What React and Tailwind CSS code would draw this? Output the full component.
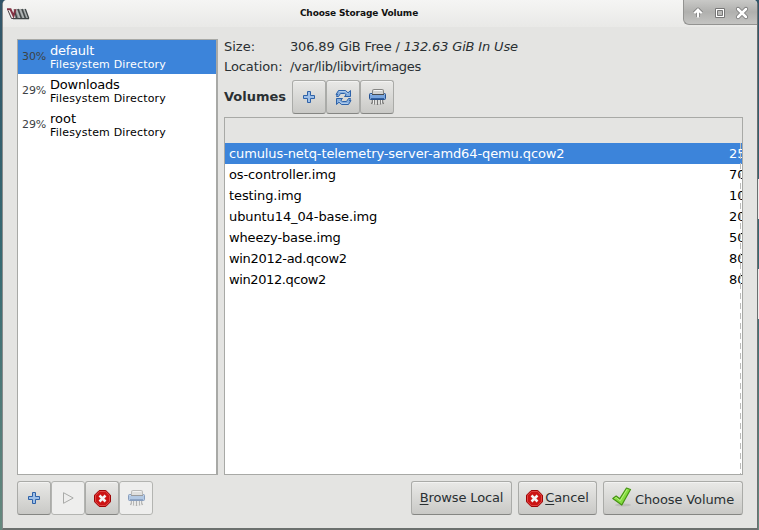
import React from 'react';

const pools = [
  { name: 'default', pct: '30%', track: 'tracking-[-0.25px]', selected: true },
  { name: 'Downloads', pct: '29%', track: 'tracking-[-0.2px]' },
  { name: 'root', pct: '29%', track: 'tracking-normal' },
];

const volumes = [
  { name: 'cumulus-netq-telemetry-server-amd64-qemu.qcow2', size: '25', track: 'tracking-[-0.11px]', selected: true },
  { name: 'os-controller.img', size: '70', track: 'tracking-[-0.12px]' },
  { name: 'testing.img', size: '10', track: 'tracking-[-0.1px]' },
  { name: 'ubuntu14_04-base.img', size: '20', track: 'tracking-[-0.1px]' },
  { name: 'wheezy-base.img', size: '50', track: 'tracking-[-0.13px]' },
  { name: 'win2012-ad.qcow2', size: '80', track: 'tracking-[-0.32px]' },
  { name: 'win2012.qcow2', size: '80', track: 'tracking-[-0.39px]' },
];

function PlusIcon() {
  return (
    <svg width="16" height="16" viewBox="0 0 16 16">
      <path d="M6.500 2.500h3v4h4v3h-4v4h-3v-4h-4v-3h4z" fill="#9dbfe8" stroke="#2f62a8" strokeLinejoin="round" />
    </svg>
  );
}

function RefreshIcon() {
  return (
    <svg width="17" height="17" viewBox="0 0 17 17" strokeLinejoin="miter">
      <g fill="#86aede" stroke="#2d62a9" strokeWidth="1">
        <path d="M1 5.500L3.500 1.500H10.500L13 3.800L15.500 1.500V7.500H9.500L11.200 5.700L9.500 4.500H5.500L3.500 7.500H1.500C1.200 6.800 2 6 3 5.300z" />
        <path d="M16 11.500L13.500 15.500H6.500L4 13.200L1.500 15.500V9.500H7.500L5.800 11.300L7.500 12.500H11.500L13.500 9.500H15.500C15.800 10.200 15 11 14 11.700z" />
      </g>
      <path d="M4 2.500h6l3 2.500M13 14.500H7L4 12" fill="none" stroke="#bad2ef" strokeWidth=".8" />
    </svg>
  );
}

function ShredderIcon({ faded = false }) {
  return (
    <svg width="17" height="17" viewBox="0 0 17 17" className={faded ? 'opacity-50' : ''}>
      <path d="M3.500 10v3L2.500 15M5.500 10v5.500M8.500 10v6M11.500 10v5.500M13.500 10v3l1 2" fill="none" stroke="#757575" strokeWidth="1.400" />
      <path d="M4.500 10v5M7 10v5M10 10v5M12.500 10v4.500" stroke="#eeeeec" strokeWidth="1.200" />
      <rect x=".5" y="4.500" width="16" height="6" rx="1" fill="#79a5dd" stroke="#24508f" />
      <path d="M1.500 5.500h14" stroke="#a6c6ec" />
      <path d="M2 9.500h13" stroke="#315f9f" />
      <rect x="3.500" y=".5" width="11" height="5" rx="1" fill="#d3d3d1" stroke="#858583" />
      <path d="M5 1.500h8" stroke="#f5f5f5" />
      <path d="M3 5.500h12" stroke="#4a4d50" />
    </svg>
  );
}

function StopIcon() {
  return (
    <svg width="17" height="17" viewBox="0 0 17 17">
      <path d="M5.200.5h6.600l4.700 4.700v6.600l-4.700 4.700H5.200L.5 11.800V5.200z" fill="#cc1414" stroke="#9c0505" />
      <path d="M5.600 1.500h5.800l4.100 4.100v5.800l-4.100 4.100H5.600l-4.100-4.100V5.600z" fill="none" stroke="#e35151" strokeWidth=".8" />
      <path d="m5.500 5.500 6 6M11.500 5.500l-6 6" stroke="#f4f4f4" strokeWidth="2.500" />
    </svg>
  );
}

function PlayIcon() {
  return (
    <svg width="16" height="16" viewBox="0 0 16 16">
      <path d="M3.500 2.700v10.600L13.200 8z" fill="#ededec" stroke="#a9aaa8" />
    </svg>
  );
}

function CheckIcon() {
  return (
    <svg width="20" height="20" viewBox="0 0 20 20">
      <ellipse cx="11" cy="18" rx="8" ry="1.500" fill="#a9a9a6" opacity=".5" />
      <path d="M.8 11.500l3.400-2.500 3.500 2.800L14.500 1l4 1.500L9.800 18z" fill="#84dc3f" stroke="#459313" strokeWidth="1.200" strokeLinejoin="round" />
      <path d="M2.600 11.500l1.600-1 4 3.300L15.100 2.300" fill="none" stroke="#b9f382" />
    </svg>
  );
}

function Logo() {
  return (
    <svg width="23" height="12" viewBox="0 0 23 12">
      <path d="M6.500 1H18l4 9.500H8z" fill="#8d9292" />
      <path d="M9 1l3.500 9M13 1l3.500 9M17 1l3.500 9" stroke="#b4b8b8" strokeWidth="1.300" />
      <path d="M11 1l3.500 9.500M15 1l3.500 9.500M18.300 1l3.500 9.500M7.500 3l2.500 7.500M6 10.700h16" stroke="#3f4545" strokeWidth="1.300" />
      <path d="M0 1.300h3.500L6.500 8l2-6.700" fill="none" stroke="#823243" strokeWidth="2" />
      <path d="M1 2.500l3.500 8h3" fill="none" stroke="#4b4247" />
    </svg>
  );
}

function WindowControls() {
  return (
    <div className="flex h-[25px] w-[74px] shrink-0 items-start gap-[6px] rounded-bl-[6px] rounded-tr-[4px] border-b border-l border-[#939391] bg-linear-to-b from-[#c9c9c7] via-[#b0b0ae] to-[#c4c4c2] pl-[6px] pt-[5px]">
      <svg width="16" height="16" viewBox="0 0 16 16">
        <path d="M8 12V6M4.500 8.200L8 4.700l3.500 3.500" fill="none" stroke="#777" strokeWidth="4" strokeLinejoin="round" />
        <path d="M8 12.500V6M4.300 8.300L8 4.600l3.700 3.700" fill="none" stroke="#fff" strokeWidth="2.300" />
      </svg>
      <svg width="16" height="16" viewBox="0 0 16 16">
        <path d="M3.500 3.500h9v9h-9z" fill="#fff" stroke="#777" />
        <path d="M5.500 5.500h5v5h-5z" fill="#b9b9b7" stroke="#777" />
      </svg>
      <svg width="16" height="16" viewBox="0 0 16 16">
        <path d="M4 4l8 8M12 4l-8 8" stroke="#777" strokeWidth="4.200" strokeLinecap="round" />
        <path d="M4 4l8 8M12 4l-8 8" stroke="#fff" strokeWidth="2.500" strokeLinecap="round" />
      </svg>
    </div>
  );
}

function Button({ children, disabled = false, className = 'w-[34px]' }) {
  return (
    <button
      className={`flex h-[34px] items-center justify-center rounded-[3px] border ${
        disabled
          ? 'border-[#b3b4b1] bg-[#eeeeed]'
          : 'border-[#aaaba8] border-b-[#858683] bg-linear-to-b from-[#e9e9e7] to-[#c9c9c6] shadow-[inset_0_1px_0_#f3f3f2]'
      } ${className}`}
    >
      {children}
    </button>
  );
}

function PoolRow({ pool }) {
  return (
    <div className={`flex h-[34px] items-center pl-1 ${pool.selected ? 'bg-[#3c84da] text-white' : 'text-black'}`}>
      <span className="w-7 text-[11px] tracking-[-0.1px] text-[#3d4245]">{pool.pct}</span>
      <div className="flex flex-col pb-px">
        <span className={`h-[15px] text-[13px] leading-[15px] ${pool.track}`}>{pool.name}</span>
        <span className="h-[13px] text-[11px] leading-[13px] tracking-[0.18px]">Filesystem Directory</span>
      </div>
    </div>
  );
}

export default function App() {
  return (
    <div className="flex h-[530px] w-[759px] overflow-hidden whitespace-nowrap bg-linear-to-b from-[#315569] via-[#376b73] to-[#66897e] font-['DejaVu_Sans',sans-serif] text-[13px] text-[#2a3033]">
      <div className="ml-[2px] flex h-[530px] w-[756px] shrink-0 flex-col rounded-t-[5px] border-x border-b-2 border-l-[#85898a] border-r-[#6b6f70] border-b-[#6b706e] bg-[#e4e4e2]">
        <header className="flex h-[27px] shrink-0 items-start rounded-t-[4px] bg-linear-to-b from-[#f5f5f4] to-[#e9e9e7]">
          <div className="w-[80px] pl-1 pt-[8px]"><Logo /></div>
          <div className="flex-1 pt-[6px] text-center text-[9px] leading-[14px] font-bold text-[#111]">
            <span className="mr-[48px] tracking-[-0.12px]">Choose Storage Volume</span>
          </div>
          <WindowControls />
        </header>
        <main className="flex h-[448px] gap-[6px] pl-[14px] pt-3">
          <section className="h-[436px] w-[201px] shrink-0 border border-r-2 border-[#a8a9a6] bg-white">
            {pools.map((pool) => <PoolRow key={pool.name} pool={pool} />)}
          </section>
          <section className="flex w-[519px] shrink-0 flex-col">
            <div className="flex h-[20px] items-start leading-[15px]">
              <span className="w-[66px]">Size:</span>
              <span className="tracking-[-0.16px]">306.89 GiB Free / <i>132.63 GiB In Use</i></span>
            </div>
            <div className="flex h-[21px] items-start leading-[15px]">
              <span className="w-[66px] tracking-[-0.1px]">Location:</span>
              <span className="tracking-[-0.33px]">/var/lib/libvirt/images</span>
            </div>
            <div className="flex h-[37px] items-start">
              <b className="w-[68px] leading-[33px]">Volumes</b>
              <Button><PlusIcon /></Button>
              <Button><RefreshIcon /></Button>
              <Button><ShredderIcon /></Button>
            </div>
            <div className="relative h-[358px] overflow-hidden border border-[#a8a9a6] bg-white text-black">
              <div className="h-[25px] bg-[#e4e4e2]" />
              {volumes.map((v) => (
                <div key={v.name} className={`flex h-[21px] pl-1 leading-[21px] ${v.selected ? 'bg-[#3c84da] text-white' : ''}`}>
                  <span className={`w-[500px] shrink-0 ${v.track}`}>{v.name}</span>
                  <span>{v.size}</span>
                </div>
              ))}
              <div className="absolute bottom-0 right-[1px] top-[25px] w-px bg-[repeating-linear-gradient(to_bottom,#bcbcba_0,#bcbcba_6px,transparent_6px,transparent_10px)]" />
            </div>
          </section>
        </main>
        <footer className="flex h-[40px] items-start pl-[14px] pt-[6px]">
          <Button><PlusIcon /></Button>
          <Button disabled><PlayIcon /></Button>
          <Button><StopIcon /></Button>
          <Button disabled><ShredderIcon faded /></Button>
          <div className="ml-[258px] flex gap-[6px]">
            <Button className="w-[101px]"><span className="tracking-[-0.13px]"><u className="underline-offset-2">B</u>rowse Local</span></Button>
            <Button className="w-[79px]"><StopIcon /><span className="ml-[2px] tracking-[-0.1px]"><u className="underline-offset-2">C</u>ancel</span></Button>
            <Button className="w-[140px]"><span className="mb-[3px] mr-[3px]"><CheckIcon /></span><span className="pt-[3px] tracking-[-0.1px]">Choose Volume</span></Button>
          </div>
        </footer>
      </div>
      <div className="flex w-px shrink-0 flex-col pt-[179px]">
        <div className="h-[40px] bg-[#ececeb]" />
        <div className="h-[50px]" />
        <div className="h-[50px] bg-[#ececeb]" />
      </div>
    </div>
  );
}
